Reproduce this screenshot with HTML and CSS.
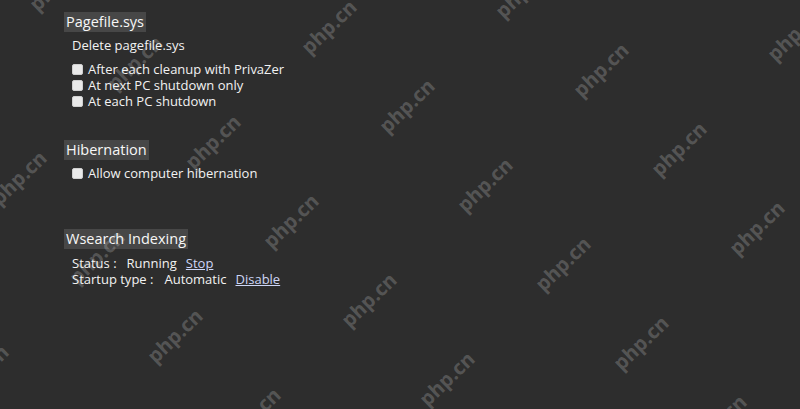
FILE: index.html
```html
<!DOCTYPE html>
<html lang="en">
<head>
<meta charset="utf-8">
<title>PrivaZer settings</title>
<link rel="stylesheet" href="styles.css">
</head>
<body>
<main class="panel">
  <section class="group">
    <h2 class="heading">Pagefile.sys</h2>
    <p class="sub">Delete pagefile.sys</p>
    <ul class="options">
      <li><label class="opt"><input type="checkbox" class="box"><span>After each cleanup with PrivaZer</span></label></li>
      <li><label class="opt"><input type="checkbox" class="box"><span>At next PC shutdown only</span></label></li>
      <li><label class="opt"><input type="checkbox" class="box"><span>At each PC shutdown</span></label></li>
    </ul>
  </section>
  <section class="group group-hib">
    <h2 class="heading">Hibernation</h2>
    <ul class="options options-tight">
      <li><label class="opt"><input type="checkbox" class="box"><span>Allow computer hibernation</span></label></li>
    </ul>
  </section>
  <section class="group group-wsearch">
    <h2 class="heading">Wsearch Indexing</h2>
    <div class="status">
      <div class="row"><span class="label">Status :</span><span class="value">Running</span><a class="link" href="#">Stop</a></div>
      <div class="row row-startup"><span class="label">Startup type :</span><span class="value">Automatic</span><a class="link" href="#">Disable</a></div>
    </div>
  </section>
</main>
<div class="watermarks" aria-hidden="true">
  <span class="wm" style="left:329px;top:27px">php.cn</span>
  <span class="wm" style="left:407px;top:106px">php.cn</span>
  <span class="wm" style="left:485px;top:185px">php.cn</span>
  <span class="wm" style="left:563px;top:264px">php.cn</span>
  <span class="wm" style="left:641px;top:343px">php.cn</span>
  <span class="wm" style="left:719px;top:422px">php.cn</span>
  <span class="wm" style="left:523px;top:-9px">php.cn</span>
  <span class="wm" style="left:601px;top:70px">php.cn</span>
  <span class="wm" style="left:679px;top:149px">php.cn</span>
  <span class="wm" style="left:757px;top:228px">php.cn</span>
  <span class="wm" style="left:795px;top:34px">php.cn</span>
  <span class="wm" style="left:57px;top:-16px">php.cn</span>
  <span class="wm" style="left:135px;top:63px">php.cn</span>
  <span class="wm" style="left:213px;top:142px">php.cn</span>
  <span class="wm" style="left:291px;top:221px">php.cn</span>
  <span class="wm" style="left:369px;top:300px">php.cn</span>
  <span class="wm" style="left:447px;top:379px">php.cn</span>
  <span class="wm" style="left:19px;top:178px">php.cn</span>
  <span class="wm" style="left:97px;top:257px">php.cn</span>
  <span class="wm" style="left:175px;top:336px">php.cn</span>
  <span class="wm" style="left:253px;top:415px">php.cn</span>
  <span class="wm" style="left:-19px;top:372px">php.cn</span>
</div>
</body>
</html>
```
FILE: styles.css
```css
html, body {
  margin: 0;
  padding: 0;
  height: 100%;
}
body {
  background: #2d2d2d;
  color: #f2f2f2;
  font-family: "Open Sans", "Noto Sans", sans-serif;
  font-size: 13px;
  overflow: hidden;
  position: relative;
}
.panel {
  padding: 12px 0 0 64px;
}
.group {
  display: flex;
  flex-direction: column;
  align-items: flex-start;
}
.group-hib {
  margin-top: 31px;
}
.group-wsearch {
  margin-top: 48px;
}
.heading {
  margin: 0;
  background: #474747;
  color: #f7f7f7;
  font-weight: normal;
  font-size: 14.5px;
  line-height: 20px;
  height: 20px;
  padding: 0 2px;
}
.sub {
  margin: 5px 0 0;
  padding-left: 8px;
  line-height: 16px;
}
.options {
  list-style: none;
  margin: 8px 0 0;
  padding: 0 0 0 8px;
}
.options-tight {
  margin-top: 5px;
}
.opt {
  display: flex;
  align-items: center;
  gap: 5px;
  height: 16px;
  line-height: 16px;
}
.box {
  appearance: none;
  -webkit-appearance: none;
  width: 11px;
  height: 11px;
  margin: 0;
  background: #e9e9e9;
  border: 1px solid #cfcfcf;
  border-radius: 2px;
  box-sizing: border-box;
}
.status {
  margin-top: 6px;
  padding-left: 8px;
}
.row {
  display: flex;
  line-height: 16px;
  height: 16px;
}
.label {
  margin-right: 10px;
}
.row-startup .label {
  margin-right: 11px;
}
.value {
  margin-right: 9px;
}
.link {
  color: #cdd6f6;
  text-decoration: underline;
}
.watermarks {
  position: absolute;
  inset: 0;
  pointer-events: none;
  overflow: hidden;
}
.wm {
  position: absolute;
  transform: translate(-50%, -50%) rotate(-44deg);
  font-family: "Open Sans", "Noto Sans", sans-serif;
  font-weight: bold;
  font-size: 20px;
  line-height: 20px;
  color: rgba(255, 255, 255, 0.2);
  white-space: nowrap;
}
```
